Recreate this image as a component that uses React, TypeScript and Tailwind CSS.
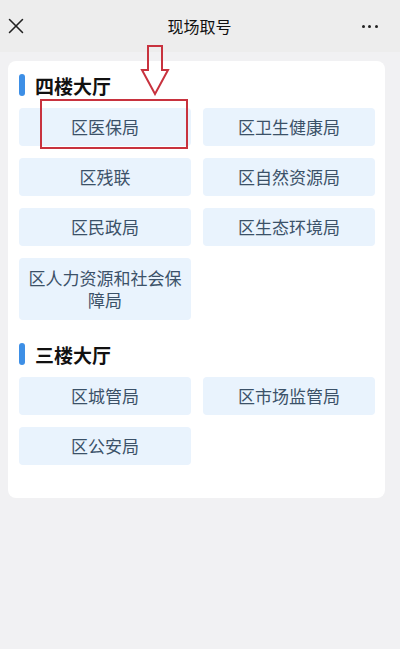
import { X } from "lucide-react";

type Hall = {
  name: string;
  offices: string[];
};

const halls: Hall[] = [
  {
    name: "四楼大厅",
    offices: ["区医保局", "区卫生健康局", "区残联", "区自然资源局", "区民政局", "区生态环境局", "区人力资源和社会保障局"],
  },
  {
    name: "三楼大厅",
    offices: ["区城管局", "区市场监管局", "区公安局"],
  },
];

function HallSection({ hall, first }: { hall: Hall; first: boolean }) {
  return (
    <section className={first ? "" : "mt-[23px]"}>
      <div className="flex h-[22px] items-center gap-[10px]">
        <span className="h-[22px] w-[6px] rounded-full bg-[#3d8fe6]" />
        <h2 className="text-[19px] font-bold leading-none text-[#111]">{hall.name}</h2>
      </div>
      <div className="mt-[12px] grid grid-cols-2 gap-x-[12px] gap-y-[12px]">
        {hall.offices.map((office) => (
          <button
            key={office}
            type="button"
            className={`flex items-center justify-center rounded-[4px] bg-[#e9f3fd] px-2 text-center text-[17px] leading-[22px] text-[#3b5168] ${
              office.length > 8 ? "py-[9px]" : "h-[38px]"
            }`}
          >
            {office}
          </button>
        ))}
      </div>
    </section>
  );
}

export default function App() {
  return (
    <div
      className="relative min-h-[649px] bg-[#f1f1f3]"
      style={{ fontFamily: '"Noto Sans CJK SC", "Noto Sans", sans-serif' }}
    >
      <header className="flex h-[52px] items-center justify-between bg-[#ededed] pl-[3px] pr-[22px]">
        <X className="h-[26px] w-[26px] text-[#222]" strokeWidth={1.4} />
        <h1 className="ml-[8px] text-[16px] text-[#111]">现场取号</h1>
        <div className="flex w-[16px] items-center justify-between">
          <span className="h-[3px] w-[3px] rounded-full bg-[#222]" />
          <span className="h-[3px] w-[3px] rounded-full bg-[#222]" />
          <span className="h-[3px] w-[3px] rounded-full bg-[#222]" />
        </div>
      </header>

      <main className="ml-2 mt-[9px] w-[377px] rounded-[8px] bg-white pb-[33px] pl-[11px] pr-[10px] pt-[13px]">
        {halls.map((hall, index) => (
          <HallSection key={hall.name} hall={hall} first={index === 0} />
        ))}
      </main>

      {/* annotation overlay */}
      <svg className="pointer-events-none absolute left-[140px] top-[44px]" width="30" height="52" viewBox="0 0 30 52">
        <path
          d="M8 2 H22 V26 H28 L15 50 L2 26 H8 Z"
          fill="none"
          stroke="#c8323e"
          strokeWidth="2"
          strokeLinejoin="miter"
        />
      </svg>
      <div className="pointer-events-none absolute left-[40px] top-[99px] h-[50px] w-[148px] border-2 border-[#c8323e]" />
    </div>
  );
}
